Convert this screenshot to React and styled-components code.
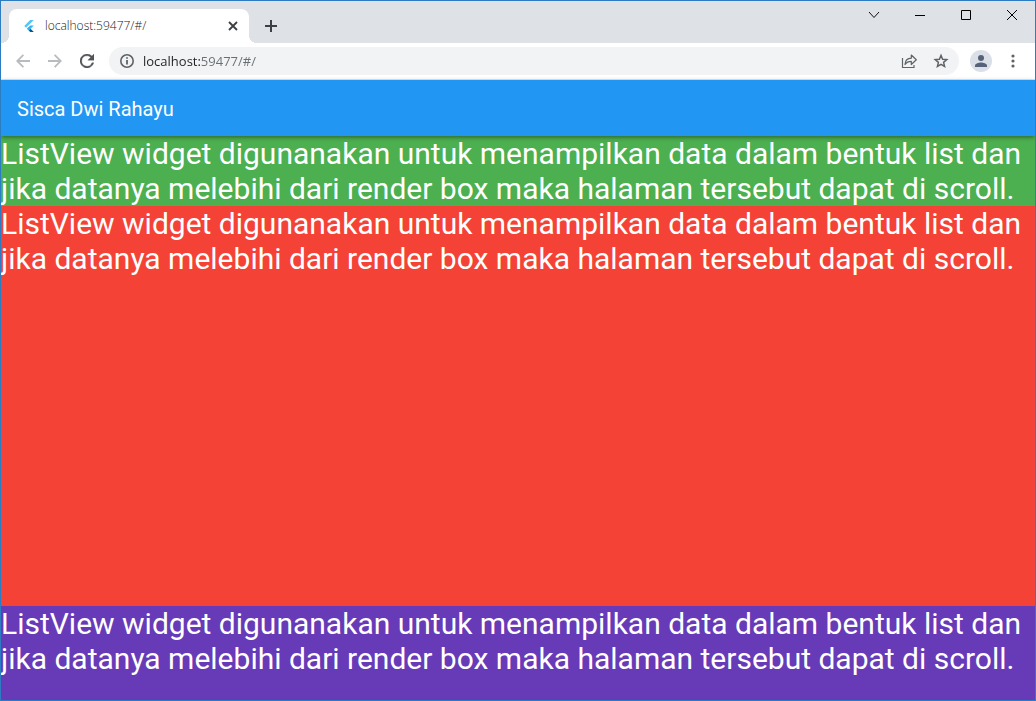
import React from "react";
import styled, { createGlobalStyle } from "styled-components";

const GlobalStyle = createGlobalStyle`
  *, *::before, *::after { box-sizing: border-box; }
  body { margin: 0; font-family: Roboto, sans-serif; }
  button { border: 0; padding: 0; margin: 0; background: none; font: inherit; color: inherit; }
`;

const Window = styled.div`
  display: flex;
  flex-direction: column;
  height: 100vh;
  border: 1px solid #2b7cc0;
  background: #fff;
  overflow: hidden;
`;

const TabStrip = styled.header`
  display: flex;
  flex: none;
  height: 42px;
  padding-left: 8px;
  background: #dee1e6;
`;

const Tab = styled.div`
  position: relative;
  display: flex;
  align-items: center;
  align-self: flex-end;
  width: 240px;
  height: 34px;
  padding: 0 8px 0 12px;
  background: #fff;
  border-radius: 8px 8px 0 0;

  &::before, &::after {
    content: "";
    position: absolute;
    bottom: 0;
    width: 8px;
    height: 8px;
  }
  &::before {
    right: 100%;
    background: radial-gradient(circle at 0 0, transparent 8px, #fff 8px);
  }
  &::after {
    left: 100%;
    background: radial-gradient(circle at 100% 0, transparent 8px, #fff 8px);
  }
`;

const Favicon = styled.span`
  display: flex;
  align-items: center;
  justify-content: center;
  width: 16px;
  height: 16px;
`;

const TabTitle = styled.span`
  flex: 1;
  margin-left: 8px;
  font: 300 12px/16px "Open Sans", sans-serif;
  color: #202124;
`;

const IconButton = styled.button`
  display: flex;
  align-items: center;
  justify-content: center;
  flex: none;
  width: ${(p) => p.$width || 32}px;
  height: ${(p) => p.$height || 32}px;
  color: ${(p) => p.$color || "#5f6368"};
`;

const NewTab = styled(IconButton)`
  align-self: flex-end;
  margin-left: 8px;
`;

const WindowControls = styled.div`
  display: flex;
  margin-left: auto;
`;

const Toolbar = styled.nav`
  display: flex;
  align-items: center;
  flex: none;
  height: 37px;
  padding: 0 6px;
  border-bottom: 1px solid #d5e9fb;
`;

const AddressBar = styled.div`
  display: flex;
  align-items: center;
  flex: 1;
  height: 28px;
  margin: 0 6px;
  padding: 0 2px 0 10px;
  border-radius: 14px;
  background: #f1f3f4;
`;

const AddressInput = styled.input`
  flex: 1;
  min-width: 0;
  height: 24px;
  margin-left: 8px;
  padding: 0;
  border: 0;
  outline: 0;
  font: 13px/20px "Open Sans", sans-serif;
  color: transparent;
  caret-color: #202124;
  background: linear-gradient(90deg, #202124 57px, #6a6e73 57px);
  background-clip: text;
  -webkit-background-clip: text;
`;

const Avatar = styled(IconButton)`
  width: 22px;
  height: 22px;
  margin: 0 5px;
  border-radius: 50%;
  background: #dadfe8;
`;

const AppBar = styled.header`
  position: relative;
  display: flex;
  align-items: center;
  flex: none;
  height: 56px;
  padding: 2px 16px 0;
  background: #2196f3;
  box-shadow: 0 2px 4px -1px rgba(0, 0, 0, 0.3), 0 1px 5px rgba(0, 0, 0, 0.2);
`;

const Title = styled.h1`
  margin: 0;
  font-size: 20px;
  line-height: 24px;
  font-weight: 400;
  color: #fff;
`;

const ListView = styled.main`
  display: flex;
  flex-direction: column;
  flex: 1;
  min-height: 0;
  overflow-y: auto;
  scrollbar-width: none;
`;

const Item = styled.p`
  flex: ${(p) => (p.$fill ? "1 0 auto" : "none")};
  min-height: ${(p) => p.$height || 0}px;
  margin: 0;
  background: ${(p) => p.$color};
  color: #fff;
  font-size: 30px;
  line-height: 35px;
`;

const Svg = ({ size = 16, box = 24, children, ...rest }) => (
  <svg width={size} height={size} viewBox={`0 0 ${box} ${box}`} fill="none" aria-hidden="true" {...rest}>
    {children}
  </svg>
);

const FlutterLogo = () => (
  <Svg size={12}>
    <path d="M14.3 0 2.5 12l3.7 3.7L21.6 0z" fill="#54c5f8" />
    <path d="M14.3 11 8 17.4l3.6 3.6 10-10z" fill="#35b5f0" />
    <path d="m11.6 21 3.6-3.6 6.4 6.600h-7.300z" fill="#01579b" />
    <path d="m8 17.4 3.6-3.6 3.6 3.6-3.6 3.6z" fill="#29b6f6" />
  </Svg>
);

const MESSAGE =
  "ListView widget digunanakan untuk menampilkan data dalam bentuk list dan jika datanya melebihi dari render box maka halaman tersebut dapat di scroll.";

const ITEMS = [
  { color: "#4caf50" },
  { color: "#f44336", height: 400 },
  { color: "#673ab7", fill: true },
];

export default function App() {
  return (
    <Window>
      <GlobalStyle />
      <TabStrip>
        <Tab>
          <Favicon>
            <FlutterLogo />
          </Favicon>
          <TabTitle>localhost:59477/#/</TabTitle>
          <IconButton aria-label="Close tab" $width={16} $height={16} $color="#3c4043">
            <Svg size={10} box={10} stroke="currentColor" strokeWidth="1.8">
              <path d="m1 1 8 8M9 1 1 9" />
            </Svg>
          </IconButton>
        </Tab>
        <NewTab aria-label="New tab" $width={28} $height={34} $color="#3c4043">
          <Svg size={12} box={12} stroke="currentColor" strokeWidth="2">
            <path d="M6 0v12M0 6h12" />
          </Svg>
        </NewTab>
        <WindowControls>
          <IconButton aria-label="Search tabs" $width={46} $height={28} $color="#111">
            <Svg size={12} box={12} stroke="currentColor"><path d="m1 3 5 5.5L11 3" /></Svg>
          </IconButton>
          <IconButton aria-label="Minimize" $width={46} $height={28} $color="#000">
            <Svg size={10} box={10} stroke="currentColor"><path d="M0 5.5h10" /></Svg>
          </IconButton>
          <IconButton aria-label="Maximize" $width={46} $height={28} $color="#000">
            <Svg size={10} box={10} stroke="currentColor"><path d="M.5.5h9v9h-9z" /></Svg>
          </IconButton>
          <IconButton aria-label="Close" $width={46} $height={28} $color="#000">
            <Svg size={10} box={10} stroke="currentColor"><path d="m0 0 10 10M10 0 0 10" /></Svg>
          </IconButton>
        </WindowControls>
      </TabStrip>

      <Toolbar>
        <IconButton aria-label="Back" $color="#b9bbbe">
          <Svg size={14} box={14} stroke="currentColor" strokeWidth="1.8">
            <path d="M14 7H1.2M7.4.8 1.200 7l6.200 6.200" />
          </Svg>
        </IconButton>
        <IconButton aria-label="Forward" $color="#b9bbbe">
          <Svg size={14} box={14} stroke="currentColor" strokeWidth="1.8">
            <path d="M0 7h12.800M6.600.8 12.800 7l-6.200 6.200" />
          </Svg>
        </IconButton>
        <IconButton aria-label="Reload" $color="#505357">
          <Svg size={14} box={16}>
            <path
              d="M13.65 2.35A8 8 0 1 0 15.74 10h-2.080A6 6 0 1 1 8 2c1.660 0 3.140.69 4.220 1.780L9 7h7V0z"
              fill="currentColor"
              stroke="currentColor"
              strokeWidth=".4"
            />
          </Svg>
        </IconButton>
        <AddressBar>
          <IconButton aria-label="Site information" $width={16} $height={16}>
            <Svg size={14} box={14}>
              <circle cx="7" cy="7" r="6.2" stroke="currentColor" strokeWidth="1.6" />
              <path d="M7 6v4.600M7 3.200v1.600" stroke="currentColor" strokeWidth="1.800" />
            </Svg>
          </IconButton>
          <AddressInput aria-label="Address" defaultValue="localhost:59477/#/" spellCheck={false} />
          <IconButton aria-label="Share">
            <Svg size={16} box={16} stroke="currentColor" strokeWidth="1.200">
              <path d="M1.500 5v9.500h11.500V12" />
              <path
                d="M4 11.500c.2-3.900 2.300-6.200 6.300-6.300V2l5 4.800-5 4.700V8.300C7.400 8.300 5.400 9.300 4 11.500z"
                strokeLinejoin="round"
              />
            </Svg>
          </IconButton>
          <IconButton aria-label="Bookmark this page">
            <Svg size={16}>
              <path
                d="m12 3.600 2.400 5.800 6.300.5-4.800 4.100 1.500 6.200L12 16.900l-5.400 3.300L8.100 14 3.300 9.900l6.300-.5z"
                stroke="currentColor"
                strokeWidth="2.200"
              />
            </Svg>
          </IconButton>
        </AddressBar>
        <Avatar aria-label="Profile" $color="#566279">
          <Svg size={18}>
            <circle cx="12" cy="8" r="4" fill="currentColor" />
            <path d="M4 20v-2c0-2.700 5.300-4 8-4s8 1.300 8 4v2z" fill="currentColor" />
          </Svg>
        </Avatar>
        <IconButton aria-label="Menu">
          <Svg size={16} box={16}>
            <circle cx="8" cy="3" r="1.600" fill="currentColor" />
            <circle cx="8" cy="8" r="1.600" fill="currentColor" />
            <circle cx="8" cy="13" r="1.600" fill="currentColor" />
          </Svg>
        </IconButton>
      </Toolbar>

      <AppBar>
        <Title>Sisca Dwi Rahayu</Title>
      </AppBar>
      <ListView>
        {ITEMS.map((item) => (
          <Item key={item.color} $color={item.color} $height={item.height} $fill={item.fill}>
            {MESSAGE}
          </Item>
        ))}
      </ListView>
    </Window>
  );
}
